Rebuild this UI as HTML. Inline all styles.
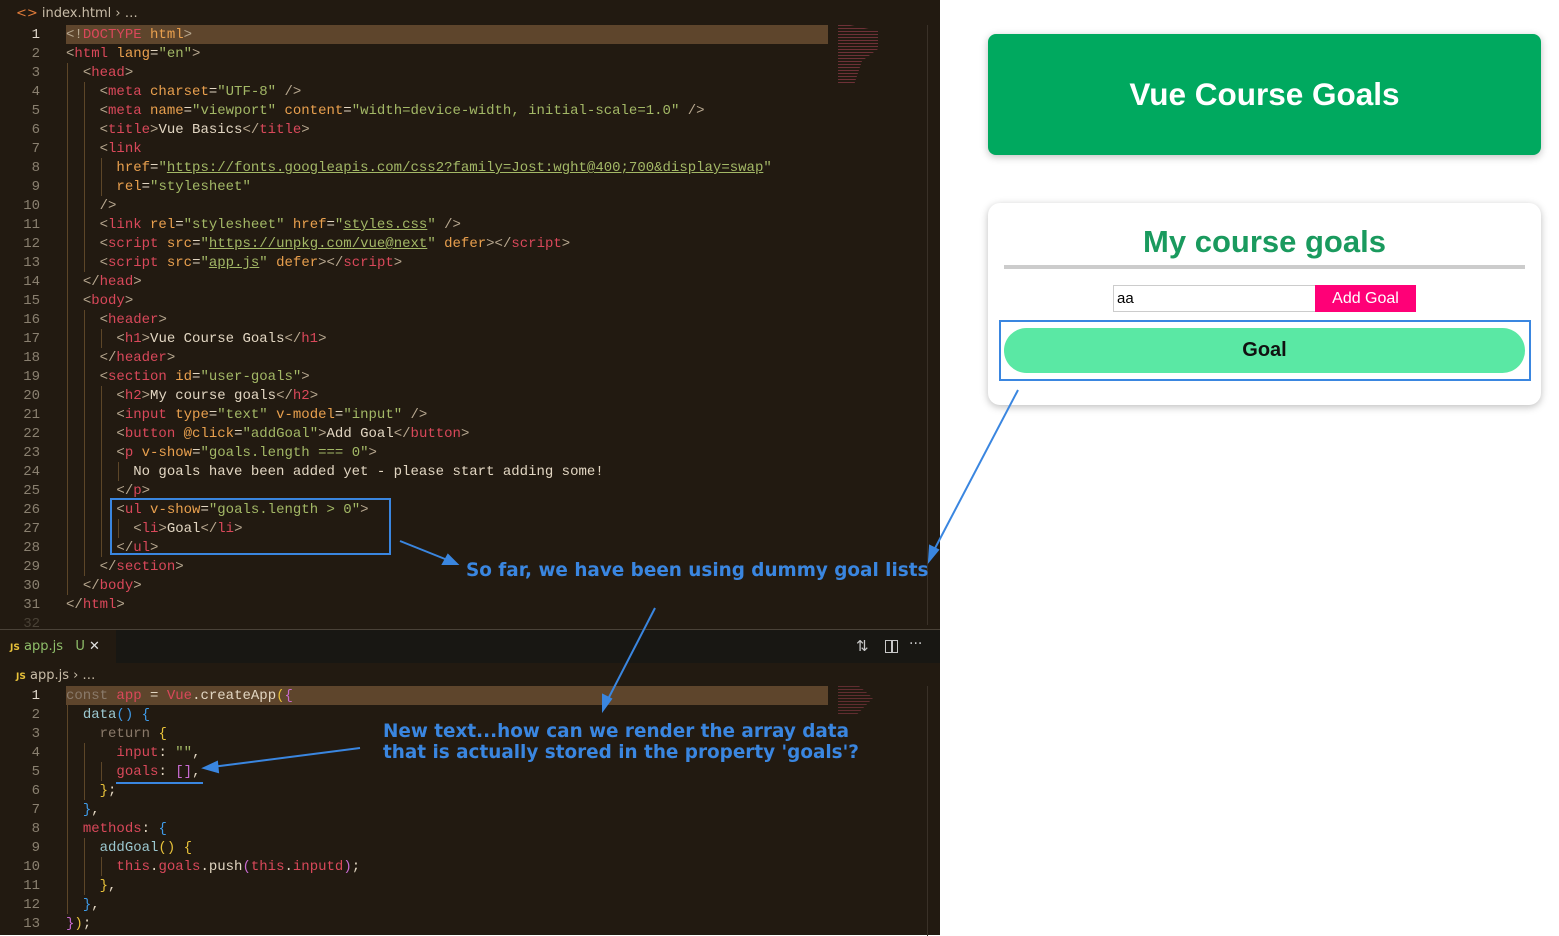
<!DOCTYPE html>
<html><head><meta charset="utf-8"><style>
*{margin:0;padding:0;box-sizing:border-box}
body{width:1559px;height:935px;overflow:hidden;background:#fff;position:relative;font-family:"Liberation Sans",sans-serif}
#ed{position:absolute;left:0;top:0;width:940px;height:935px;background:#221a11}
.l{position:absolute;left:66px;font:14px/19px "Liberation Mono",monospace;white-space:pre;color:#e2d6c2}
.n{position:absolute;width:40px;text-align:right;left:0;font:14px/19px "Liberation Mono",monospace;color:#8a8070}
.t{color:#d9485a}.p{color:#b8a890}.a{color:#e9a04e}.s{color:#a3b866}.u{text-decoration:underline}
.g{color:#8a7a6a}.b{color:#3f9be8}.y{color:#e8c23a}.m{color:#c86ad0}.c{color:#9cc8d0}
.guide{position:absolute;width:1px;background:#5d4628}
.ann{position:absolute;font:bold 18.4px/21px "DejaVu Sans",sans-serif;color:#3a86e0;white-space:nowrap}
</style></head><body>
<div id="ed">
<div style="position:absolute;left:16px;top:6px;font:13px 'DejaVu Sans',sans-serif;color:#c8bca8"><span style="color:#e07b3a">&lt;&gt;</span> index.html › …</div>
<div style="position:absolute;left:66px;top:25px;width:762px;height:19px;background:#5e452c"></div>
<div class="guide" style="left:67px;top:63px;height:532px"></div>
<div class="guide" style="left:84px;top:82px;height:190px"></div>
<div class="guide" style="left:84px;top:310px;height:266px"></div>
<div class="guide" style="left:101px;top:158px;height:38px"></div>
<div class="guide" style="left:101px;top:329px;height:19px"></div>
<div class="guide" style="left:101px;top:386px;height:171px"></div>
<div class="guide" style="left:118px;top:462px;height:19px"></div>
<div class="guide" style="left:118px;top:519px;height:19px"></div>
<div style="position:absolute;left:927px;top:25px;width:1px;height:600px;background:#3a3128"></div>

<div style="position:absolute;left:0;top:629px;width:940px;height:1px;background:#4a4238"></div>
<div style="position:absolute;left:0;top:630px;width:940px;height:33px;background:#181713"></div>
<div style="position:absolute;left:0;top:630px;width:116px;height:33px;background:#221a11"></div>
<div style="position:absolute;left:10px;top:639px;font:13px 'DejaVu Sans',sans-serif;color:#8fbf6a"><span style="color:#e8c23a;font-size:9px;font-weight:bold">JS</span> app.js &nbsp; <span style="color:#8fbf6a">U</span> <span style="color:#e0e0e0">✕</span></div>
<div style="position:absolute;left:856px;top:637px;font:15px 'DejaVu Sans';color:#c8c8c8">⇅</div>
<div style="position:absolute;left:885px;top:640px;width:13px;height:13px;border:1.5px solid #c8c8c8"></div>
<div style="position:absolute;left:891px;top:640px;width:1.5px;height:13px;background:#c8c8c8"></div>
<div style="position:absolute;left:909px;top:636px;font:14px 'DejaVu Sans';color:#c8c8c8">···</div>
<div style="position:absolute;left:16px;top:668px;font:13px 'DejaVu Sans',sans-serif;color:#c8bca8"><span style="color:#e8c23a;font-size:9px;font-weight:bold">JS</span> app.js › …</div>
<div style="position:absolute;left:66px;top:686px;width:762px;height:19px;background:#5e452c"></div>
<div class="guide" style="left:67px;top:705px;height:209px"></div>
<div class="guide" style="left:84px;top:743px;height:57px"></div>
<div class="guide" style="left:84px;top:838px;height:57px"></div>
<div class="guide" style="left:101px;top:762px;height:19px"></div>
<div class="guide" style="left:101px;top:857px;height:19px"></div>
<div style="position:absolute;left:927px;top:686px;width:1px;height:250px;background:#3a3128"></div>
</div>

<div style="position:absolute;left:0;top:1px">
<div class="n" style="top:25px;color:#e0d8cc">1</div><div class="l" style="top:25px"><span class="p">&lt;!</span><span class="t">DOCTYPE</span> <span class="a">html</span><span class="p">&gt;</span></div>
<div class="n" style="top:44px">2</div><div class="l" style="top:44px"><span class="p">&lt;</span><span class="t">html</span> <span class="a">lang</span>=<span class="s">"en"</span><span class="p">&gt;</span></div>
<div class="n" style="top:63px">3</div><div class="l" style="top:63px">  <span class="p">&lt;</span><span class="t">head</span><span class="p">&gt;</span></div>
<div class="n" style="top:82px">4</div><div class="l" style="top:82px">    <span class="p">&lt;</span><span class="t">meta</span> <span class="a">charset</span>=<span class="s">"UTF-8"</span> <span class="p">/&gt;</span></div>
<div class="n" style="top:101px">5</div><div class="l" style="top:101px">    <span class="p">&lt;</span><span class="t">meta</span> <span class="a">name</span>=<span class="s">"viewport"</span> <span class="a">content</span>=<span class="s">"width=device-width, initial-scale=1.0"</span> <span class="p">/&gt;</span></div>
<div class="n" style="top:120px">6</div><div class="l" style="top:120px">    <span class="p">&lt;</span><span class="t">title</span><span class="p">&gt;</span>Vue Basics<span class="p">&lt;/</span><span class="t">title</span><span class="p">&gt;</span></div>
<div class="n" style="top:139px">7</div><div class="l" style="top:139px">    <span class="p">&lt;</span><span class="t">link</span></div>
<div class="n" style="top:158px">8</div><div class="l" style="top:158px">      <span class="a">href</span>=<span class="s">"<span class="u">https://fonts.googleapis.com/css2?family=Jost:wght@400;700&amp;display=swap</span>"</span></div>
<div class="n" style="top:177px">9</div><div class="l" style="top:177px">      <span class="a">rel</span>=<span class="s">"stylesheet"</span></div>
<div class="n" style="top:196px">10</div><div class="l" style="top:196px">    <span class="p">/&gt;</span></div>
<div class="n" style="top:215px">11</div><div class="l" style="top:215px">    <span class="p">&lt;</span><span class="t">link</span> <span class="a">rel</span>=<span class="s">"stylesheet"</span> <span class="a">href</span>=<span class="s">"<span class="u">styles.css</span>"</span> <span class="p">/&gt;</span></div>
<div class="n" style="top:234px">12</div><div class="l" style="top:234px">    <span class="p">&lt;</span><span class="t">script</span> <span class="a">src</span>=<span class="s">"<span class="u">https://unpkg.com/vue@next</span>"</span> <span class="a">defer</span><span class="p">&gt;&lt;/</span><span class="t">script</span><span class="p">&gt;</span></div>
<div class="n" style="top:253px">13</div><div class="l" style="top:253px">    <span class="p">&lt;</span><span class="t">script</span> <span class="a">src</span>=<span class="s">"<span class="u">app.js</span>"</span> <span class="a">defer</span><span class="p">&gt;&lt;/</span><span class="t">script</span><span class="p">&gt;</span></div>
<div class="n" style="top:272px">14</div><div class="l" style="top:272px">  <span class="p">&lt;/</span><span class="t">head</span><span class="p">&gt;</span></div>
<div class="n" style="top:291px">15</div><div class="l" style="top:291px">  <span class="p">&lt;</span><span class="t">body</span><span class="p">&gt;</span></div>
<div class="n" style="top:310px">16</div><div class="l" style="top:310px">    <span class="p">&lt;</span><span class="t">header</span><span class="p">&gt;</span></div>
<div class="n" style="top:329px">17</div><div class="l" style="top:329px">      <span class="p">&lt;</span><span class="t">h1</span><span class="p">&gt;</span>Vue Course Goals<span class="p">&lt;/</span><span class="t">h1</span><span class="p">&gt;</span></div>
<div class="n" style="top:348px">18</div><div class="l" style="top:348px">    <span class="p">&lt;/</span><span class="t">header</span><span class="p">&gt;</span></div>
<div class="n" style="top:367px">19</div><div class="l" style="top:367px">    <span class="p">&lt;</span><span class="t">section</span> <span class="a">id</span>=<span class="s">"user-goals"</span><span class="p">&gt;</span></div>
<div class="n" style="top:386px">20</div><div class="l" style="top:386px">      <span class="p">&lt;</span><span class="t">h2</span><span class="p">&gt;</span>My course goals<span class="p">&lt;/</span><span class="t">h2</span><span class="p">&gt;</span></div>
<div class="n" style="top:405px">21</div><div class="l" style="top:405px">      <span class="p">&lt;</span><span class="t">input</span> <span class="a">type</span>=<span class="s">"text"</span> <span class="a">v-model</span>=<span class="s">"input"</span> <span class="p">/&gt;</span></div>
<div class="n" style="top:424px">22</div><div class="l" style="top:424px">      <span class="p">&lt;</span><span class="t">button</span> <span class="a">@click</span>=<span class="s">"addGoal"</span><span class="p">&gt;</span>Add Goal<span class="p">&lt;/</span><span class="t">button</span><span class="p">&gt;</span></div>
<div class="n" style="top:443px">23</div><div class="l" style="top:443px">      <span class="p">&lt;</span><span class="t">p</span> <span class="a">v-show</span>=<span class="s">"goals.length === 0"</span><span class="p">&gt;</span></div>
<div class="n" style="top:462px">24</div><div class="l" style="top:462px">        No goals have been added yet - please start adding some!</div>
<div class="n" style="top:481px">25</div><div class="l" style="top:481px">      <span class="p">&lt;/</span><span class="t">p</span><span class="p">&gt;</span></div>
<div class="n" style="top:500px">26</div><div class="l" style="top:500px">      <span class="p">&lt;</span><span class="t">ul</span> <span class="a">v-show</span>=<span class="s">"goals.length &gt; 0"</span><span class="p">&gt;</span></div>
<div class="n" style="top:519px">27</div><div class="l" style="top:519px">        <span class="p">&lt;</span><span class="t">li</span><span class="p">&gt;</span>Goal<span class="p">&lt;/</span><span class="t">li</span><span class="p">&gt;</span></div>
<div class="n" style="top:538px">28</div><div class="l" style="top:538px">      <span class="p">&lt;/</span><span class="t">ul</span><span class="p">&gt;</span></div>
<div class="n" style="top:557px">29</div><div class="l" style="top:557px">    <span class="p">&lt;/</span><span class="t">section</span><span class="p">&gt;</span></div>
<div class="n" style="top:576px">30</div><div class="l" style="top:576px">  <span class="p">&lt;/</span><span class="t">body</span><span class="p">&gt;</span></div>
<div class="n" style="top:595px">31</div><div class="l" style="top:595px"><span class="p">&lt;/</span><span class="t">html</span><span class="p">&gt;</span></div>
<div class="n" style="top:614px;color:#4a4236">32</div>

<div class="n" style="top:686px;color:#e0d8cc">1</div><div class="l" style="top:686px"><span class="g">const</span> <span class="t">app</span> = <span class="t">Vue</span>.createApp<span class="y">(</span><span class="m">{</span></div>
<div class="n" style="top:705px">2</div><div class="l" style="top:705px">  <span class="c">data</span><span class="b">()</span> <span class="b">{</span></div>
<div class="n" style="top:724px">3</div><div class="l" style="top:724px">    <span class="g">return</span> <span class="y">{</span></div>
<div class="n" style="top:743px">4</div><div class="l" style="top:743px">      <span class="t">input</span>: <span class="s">""</span>,</div>
<div class="n" style="top:762px">5</div><div class="l" style="top:762px">      <span class="t">goals</span>: <span class="m">[]</span>,</div>
<div class="n" style="top:781px">6</div><div class="l" style="top:781px">    <span class="y">}</span>;</div>
<div class="n" style="top:800px">7</div><div class="l" style="top:800px">  <span class="b">}</span>,</div>
<div class="n" style="top:819px">8</div><div class="l" style="top:819px">  <span class="t">methods</span>: <span class="b">{</span></div>
<div class="n" style="top:838px">9</div><div class="l" style="top:838px">    <span class="c">addGoal</span><span class="y">()</span> <span class="y">{</span></div>
<div class="n" style="top:857px">10</div><div class="l" style="top:857px">      <span class="t">this</span>.<span class="t">goals</span>.push<span class="m">(</span><span class="t">this</span>.<span class="t">inputd</span><span class="m">)</span>;</div>
<div class="n" style="top:876px">11</div><div class="l" style="top:876px">    <span class="y">}</span>,</div>
<div class="n" style="top:895px">12</div><div class="l" style="top:895px">  <span class="b">}</span>,</div>
<div class="n" style="top:914px">13</div><div class="l" style="top:914px"><span class="m">}</span><span class="y">)</span>;</div>
</div>

<div style="position:absolute;left:838px;top:25px;width:40px;height:60px;opacity:.6;background:repeating-linear-gradient(#a04050 0 1px,transparent 1px 3px);clip-path:polygon(0 0,30% 0,100% 10%,100% 40%,60% 60%,40% 100%,0 100%)"></div>
<div style="position:absolute;left:838px;top:686px;width:35px;height:30px;opacity:.5;background:repeating-linear-gradient(#a04050 0 1px,transparent 1px 3px);clip-path:polygon(0 0,60% 0,100% 40%,50% 100%,0 100%)"></div>

<div style="position:absolute;left:988px;top:34px;width:553px;height:121px;background:#00a95f;border-radius:8px;box-shadow:0 2px 8px rgba(0,0,0,.25);color:#fff;font:bold 31.5px/121px 'Liberation Sans',sans-serif;text-align:center">Vue Course Goals</div>
<div style="position:absolute;left:988px;top:203px;width:553px;height:202px;background:#fff;border-radius:12px;box-shadow:0 2px 8px rgba(0,0,0,.26)"></div>
<div style="position:absolute;left:988px;top:222px;width:553px;text-align:center;font:bold 31px/40px 'Liberation Sans',sans-serif;color:#1a9a5e">My course goals</div>
<div style="position:absolute;left:1004px;top:265px;width:521px;height:4px;background:#ccc"></div>
<div style="position:absolute;left:1113px;top:285px;width:203px;height:27px;border:1px solid #ccc;font:15px/25px 'Liberation Sans',sans-serif;padding-left:3px;color:#000">aa</div>
<div style="position:absolute;left:1315px;top:285px;width:101px;height:27px;background:#ff0077;color:#fff;font:16px/27px 'Liberation Sans',sans-serif;text-align:center">Add Goal</div>
<div style="position:absolute;left:1004px;top:328px;width:521px;height:45px;background:#5ae8a4;border-radius:23px;text-align:center;font:bold 20px/45px 'Liberation Sans',sans-serif;color:#111">Goal</div>
<div style="position:absolute;left:999px;top:320px;width:532px;height:61px;border:2px solid #3a86e0"></div>
<div style="position:absolute;left:110px;top:498px;width:281px;height:57px;border:2px solid #3a86e0"></div>
<div style="position:absolute;left:116px;top:782px;width:87px;height:2px;background:#3a86e0"></div>

<div class="ann" style="left:466px;top:560px">So far, we have been using dummy goal lists</div>
<div class="ann" style="left:383px;top:721px">New text...how can we render the array data</div>
<div class="ann" style="left:383px;top:742px">that is actually stored in the property 'goals'?</div>

<svg style="position:absolute;left:0;top:0" width="1559" height="935">
<g stroke="#3a86e0" stroke-width="2" fill="#3a86e0">
<line x1="400" y1="541" x2="450" y2="561"/><polygon points="457,564 443,564 448,555"/>
<line x1="1018" y1="390" x2="932" y2="554"/><polygon points="929,561 930,546 938,550"/>
<line x1="655" y1="608" x2="606" y2="703"/><polygon points="603,710 603,695 611,699"/>
<line x1="360" y1="748" x2="212" y2="767"/><polygon points="204,768 217,762 218,772"/>
</g></svg>
</body></html>
